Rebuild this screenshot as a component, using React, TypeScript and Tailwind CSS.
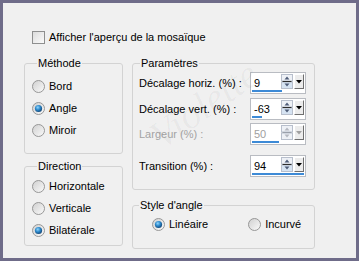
import React from "react";

function Radio({ checked }: { checked?: boolean }) {
  return (
    <svg width="13" height="13" viewBox="0 0 13 13" className="shrink-0">
      <defs>
        <linearGradient id="radioBg" x1="0" y1="0" x2="1" y2="1">
          <stop offset="0" stopColor="#cfcfcf" />
          <stop offset="1" stopColor="#fbfbfb" />
        </linearGradient>
        <radialGradient id="radioDot" cx="0.4" cy="0.35" r="0.7">
          <stop offset="0" stopColor="#8fd6ff" />
          <stop offset="0.5" stopColor="#2a86c8" />
          <stop offset="1" stopColor="#123f6e" />
        </radialGradient>
      </defs>
      <circle cx="6.5" cy="6.5" r="6" fill="url(#radioBg)" stroke="#979797" />
      {checked && <circle cx="6.5" cy="6.5" r="3.6" fill="url(#radioDot)" />}
    </svg>
  );
}

function RadioRow({ label, checked }: { label: string; checked?: boolean }) {
  return (
    <div className="flex h-[22px] items-center gap-[4px]">
      <Radio checked={checked} />
      <span>{label}</span>
    </div>
  );
}

function SpinArrows({ disabled }: { disabled?: boolean }) {
  const c = disabled ? "#b4b8c0" : "#4f5d78";
  return (
    <svg width="12" height="15" viewBox="0 0 12 15" className="shrink-0">
      <rect x="0.5" y="0.5" width="11" height="6.5" fill="#eef1f6" stroke="#b8bfcc" />
      <rect x="0.5" y="8" width="11" height="6.5" fill={disabled ? "#eef1f6" : "#d6e3f2"} stroke="#b8bfcc" />
      <path d="M3.5 5.5 L6 2.5 L8.5 5.5 Z" fill={c} />
      <path d="M3.5 9.5 L6 12.5 L8.5 9.5 Z" fill={c} />
      <line x1="1.5" y1="7.5" x2="10.5" y2="7.5" stroke={disabled ? "#9aa0aa" : "#2c2c2c"} />
    </svg>
  );
}

function DropBtn({ disabled }: { disabled?: boolean }) {
  return (
    <div className="flex h-[15px] w-[10px] shrink-0 items-center justify-center border border-t-white border-l-white border-r-[#6f6f6f] border-b-[#6f6f6f] bg-[#ececec]">
      <svg width="6" height="4" viewBox="0 0 6 4">
        <path d="M0 0 L6 0 L3 3.5 Z" fill={disabled ? "#a0a0a0" : "#000"} />
      </svg>
    </div>
  );
}

function Spin({ value, pct, disabled }: { value: string; pct: number; disabled?: boolean }) {
  return (
    <div className="flex h-[22px] w-[56px] flex-col border border-[#b9bcc2] bg-white">
      <div className="flex flex-1 items-center gap-[1px] pl-[3px] pr-[1px]">
        <span className={`flex-1 self-start pt-[4px] ${disabled ? "text-[#a0a0a0]" : "text-black"}`}>{value}</span>
        <SpinArrows disabled={disabled} />
        <DropBtn disabled={disabled} />
      </div>
      <div className="mb-[1px] ml-[1px] h-[3px] bg-[#3d8ad6]" style={{ width: `${pct}%` }} />
    </div>
  );
}

function ParamRow({ label, value, pct, disabled, className }: { label: string; value: string; pct: number; disabled?: boolean; className?: string }) {
  return (
    <div className={`flex items-center justify-between ${className ?? ""}`}>
      <span className={disabled ? "text-[#a3a3a3]" : ""}>{label}</span>
      <Spin value={value} pct={pct} disabled={disabled} />
    </div>
  );
}

export default function App() {
  return (
    <div className="h-[261px] w-[359px] bg-[#6f6c89] p-[3px] font-['Liberation_Sans',Arial,sans-serif] text-[11px] leading-[13px] text-black">
      <div className="relative h-full bg-[#f0f0f0] px-[21px] pt-[28px]">
        {/* Checkbox */}
        <div className="flex items-center gap-[4px] pl-[8px]">
          <div className="h-[13px] w-[13px] border border-[#8e8f8f] bg-gradient-to-br from-[#dcdcdc] to-[#fbfbfb]" />
          <span>Afficher l'aperçu de la mosaïque</span>
        </div>

        <div className="mt-[13px] flex gap-[9px]">
          {/* Left column */}
          <div className="flex w-[99px] flex-col gap-[6px]">
            <fieldset className="rounded-[3px] border border-[#d3d3d3] px-[7px] pt-[5px] pb-[12px]">
              <legend className="ml-[5px] px-[1px]">Méthode</legend>
              <RadioRow label="Bord" />
              <RadioRow label="Angle" checked />
              <RadioRow label="Miroir" />
            </fieldset>
            <fieldset className="rounded-[3px] border border-[#d3d3d3] px-[7px] pt-[2px] pb-[4px]">
              <legend className="ml-[5px] px-[1px]">Direction</legend>
              <RadioRow label="Horizontale" />
              <RadioRow label="Verticale" />
              <RadioRow label="Bilatérale" checked />
            </fieldset>
          </div>

          {/* Right column */}
          <div className="flex w-[183px] flex-col gap-[9px]">
            <fieldset className="rounded-[3px] border border-[#d3d3d3] pl-[6px] pr-[8px] pt-[2px] pb-[12px]">
              <legend className="ml-[1px] px-[1px]">Paramètres</legend>
              <ParamRow label="Décalage horiz. (%) :" value="9" pct={55} />
              <ParamRow label="Décalage vert. (%) :" value="-63" pct={18} className="mt-[4px]" />
              <ParamRow label="Largeur (%) :" value="50" pct={50} disabled className="mt-[3px]" />
              <ParamRow label="Transition (%) :" value="94" pct={96} className="mt-[10px]" />
            </fieldset>
            <fieldset className="rounded-[3px] border border-[#d3d3d3] pl-[19px] pt-[1px] pb-[13px]">
              <legend className="-ml-[13px] px-[1px]">Style d'angle</legend>
              <div className="flex gap-[40px]">
                <RadioRow label="Linéaire" checked />
                <RadioRow label="Incurvé" />
              </div>
            </fieldset>
          </div>
        </div>

        {/* watermark */}
        <span className="pointer-events-none absolute left-[140px] top-[95px] -rotate-[35deg] font-['Liberation_Serif',serif] text-[40px] italic text-black/[0.04]">
          Violette
        </span>
      </div>
    </div>
  );
}
